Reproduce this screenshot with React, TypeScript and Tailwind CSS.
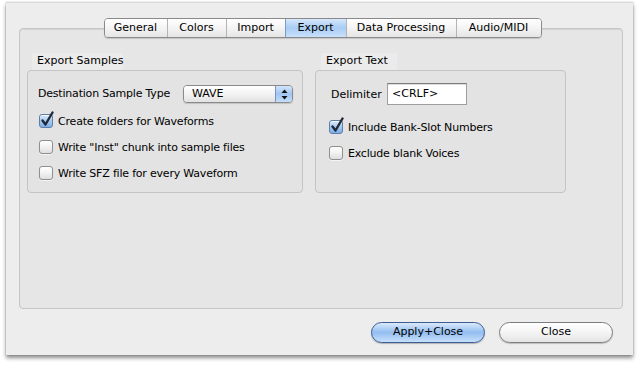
import React from "react";

const font = { fontFamily: '"DejaVu Sans", "Lucida Grande", sans-serif' };

function Check({ checked }: { checked?: boolean }) {
  return (
    <div className="relative w-[14px] h-[14px] shrink-0">
      <div
        className={
          checked
            ? "w-[14px] h-[14px] rounded-[3px] border border-[#5d7ea6] bg-gradient-to-b from-[#dbe9fb] via-[#a9c9f0] to-[#7eaee8] shadow-[inset_0_1px_0_rgba(255,255,255,0.8)]"
            : "w-[14px] h-[14px] rounded-[3px] border border-[#8f8f8f] bg-gradient-to-b from-[#ffffff] via-[#f2f2f2] to-[#dedede] shadow-[0_1px_0_rgba(255,255,255,0.6)]"
        }
      />
      {checked && (
        <svg className="absolute left-[1px] top-[-3px]" width="15" height="16" viewBox="0 0 15 16">
          <path d="M2.5 9.5 L5.5 13.5 L12.5 1.5" fill="none" stroke="#1f2a3a" strokeWidth="2.4" strokeLinecap="round" strokeLinejoin="round" />
        </svg>
      )}
    </div>
  );
}

function CheckRow({ label, checked, w }: { label: string; checked?: boolean; w: string }) {
  return (
    <div className={`flex items-center gap-[5px] h-[18px] ${w}`}>
      <Check checked={checked} />
      <span className="text-[11px] leading-none text-black whitespace-nowrap tracking-[-0.2px]">{label}</span>
    </div>
  );
}

const tabs = ["General", "Colors", "Import", "Export", "Data Processing", "Audio/MIDI"];
const tabW = ["w-[62px]", "w-[59px]", "w-[59px]", "w-[61px]", "w-[110px]", "w-[85px]"];

export default function App() {
  return (
    <div className="w-[640px] h-[366px] bg-white overflow-hidden" style={font}>
      <div className="ml-[6px] mt-[2px] w-[627px] h-[353px] bg-[#ededed] border-t border-[#dcdcdc] shadow-[0_3px_4px_rgba(0,0,0,0.45),0_0_1px_rgba(0,0,0,0.35)] flex flex-col">
        {/* tab bar */}
        <div className="flex justify-center pt-[15px] relative z-10 pl-[6px]">
          <div className="flex h-[20px] rounded-[4px] border border-[#8a8a8a] overflow-hidden shadow-[0_1px_1px_rgba(0,0,0,0.15)]">
            {tabs.map((t, i) => (
              <div
                key={t}
                className={`${tabW[i]} flex items-center justify-center text-[11px] text-black ${
                  i > 0 ? "border-l border-[#b4b4b4]" : ""
                } ${
                  t === "Export"
                    ? "bg-gradient-to-b from-[#d6e7fb] via-[#a8ccf4] to-[#c9e0fb] border-l-[#7f9cc0]"
                    : "bg-gradient-to-b from-[#ffffff] via-[#f4f4f4] to-[#e6e6e6]"
                }`}
              >
                {t}
              </div>
            ))}
          </div>
        </div>
        {/* tab box */}
        <div className="mx-[13px] mr-[10px] mt-[-10px] h-[281px] rounded-[4px] border border-[#c6c6c6] bg-[#e6e6e6] shadow-[inset_0_1px_1px_rgba(0,0,0,0.08)] pt-[24px] px-[7px] flex gap-[12px]">
          {/* Export Samples */}
          <div className="flex flex-col w-[276px]">
            <div className="ml-[5px] w-[91px] h-[17px] bg-[#ebebeb] text-[11px] text-black flex items-center pl-[5px] whitespace-nowrap">
              Export Samples
            </div>
            <div className="h-[123px] rounded-[4px] border border-[#c4c4c4] bg-[#e3e3e3] pt-[14px] pl-[10px] flex flex-col">
              <div className="flex items-center h-[18px]">
                <span className="text-[11px] text-black whitespace-nowrap w-[145px] tracking-[-0.2px]">Destination Sample Type</span>
                <div className="flex w-[110px] h-[18px] rounded-[4px] border border-[#8a8a8a] overflow-hidden shadow-[0_1px_1px_rgba(0,0,0,0.15)]">
                  <div className="flex-1 bg-gradient-to-b from-[#ffffff] via-[#f3f3f3] to-[#e2e2e2] text-[11px] text-black flex items-center pl-[8px]">
                    WAVE
                  </div>
                  <div className="w-[17px] border-l border-[#7a95bb] bg-gradient-to-b from-[#d3e5fb] via-[#9fc5f1] to-[#c6def9] flex items-center justify-center">
                    <svg width="7" height="11" viewBox="0 0 7 11">
                      <path d="M3.5 0.5 L6.5 4 L0.5 4 Z" fill="#111" />
                      <path d="M3.5 10.5 L6.5 7 L0.5 7 Z" fill="#111" />
                    </svg>
                  </div>
                </div>
              </div>
              <div className="flex flex-col gap-[8px] mt-[9px] pl-[1px]">
                <CheckRow label="Create folders for Waveforms" checked w="w-[200px]" />
                <CheckRow label={'Write "Inst" chunk into sample files'} w="w-[240px]" />
                <CheckRow label="Write SFZ file for every Waveform" w="w-[240px]" />
              </div>
            </div>
          </div>
          {/* Export Text */}
          <div className="flex flex-col w-[251px]">
            <div className="ml-[6px] w-[76px] h-[17px] bg-[#ebebeb] text-[11px] text-black flex items-center pl-[5px] whitespace-nowrap">
              Export Text
            </div>
            <div className="h-[123px] rounded-[4px] border border-[#c4c4c4] bg-[#e3e3e3] pt-[12px] pl-[15px] flex flex-col">
              <div className="flex items-center h-[22px]">
                <span className="text-[11px] text-black w-[56px] whitespace-nowrap pt-[3px]">Delimiter</span>
                <div className="w-[80px] h-[22px] bg-white border border-[#a0a0a0] border-t-[#7c7c7c] shadow-[inset_0_1px_1px_rgba(0,0,0,0.15)] text-[11px] text-black pl-[4px] pt-[3px] leading-[13px]">
                  {"<CRLF>"}
                </div>
              </div>
              <div className="flex flex-col gap-[8px] mt-[13px] ml-[-2px]">
                <CheckRow label="Include Bank-Slot Numbers" checked w="w-[197px]" />
                <CheckRow label="Exclude blank Voices" w="w-[197px]" />
              </div>
            </div>
          </div>
        </div>
        {/* buttons */}
        <div className="flex justify-end gap-[14px] pr-[20px] mt-[13px]">
          <button className="w-[114px] h-[21px] rounded-full border border-[#3b5d94] bg-gradient-to-b from-[#dbe9fb] via-[#92bdf0] to-[#c8e0fb] text-[11px] text-black shadow-[0_1px_1px_rgba(0,0,0,0.25)]">
            Apply+Close
          </button>
          <button className="w-[114px] h-[21px] rounded-full border border-[#7d7d7d] bg-gradient-to-b from-[#ffffff] via-[#f4f4f4] to-[#e4e4e4] text-[11px] text-black shadow-[0_1px_1px_rgba(0,0,0,0.2)]">
            Close
          </button>
        </div>
      </div>
    </div>
  );
}
